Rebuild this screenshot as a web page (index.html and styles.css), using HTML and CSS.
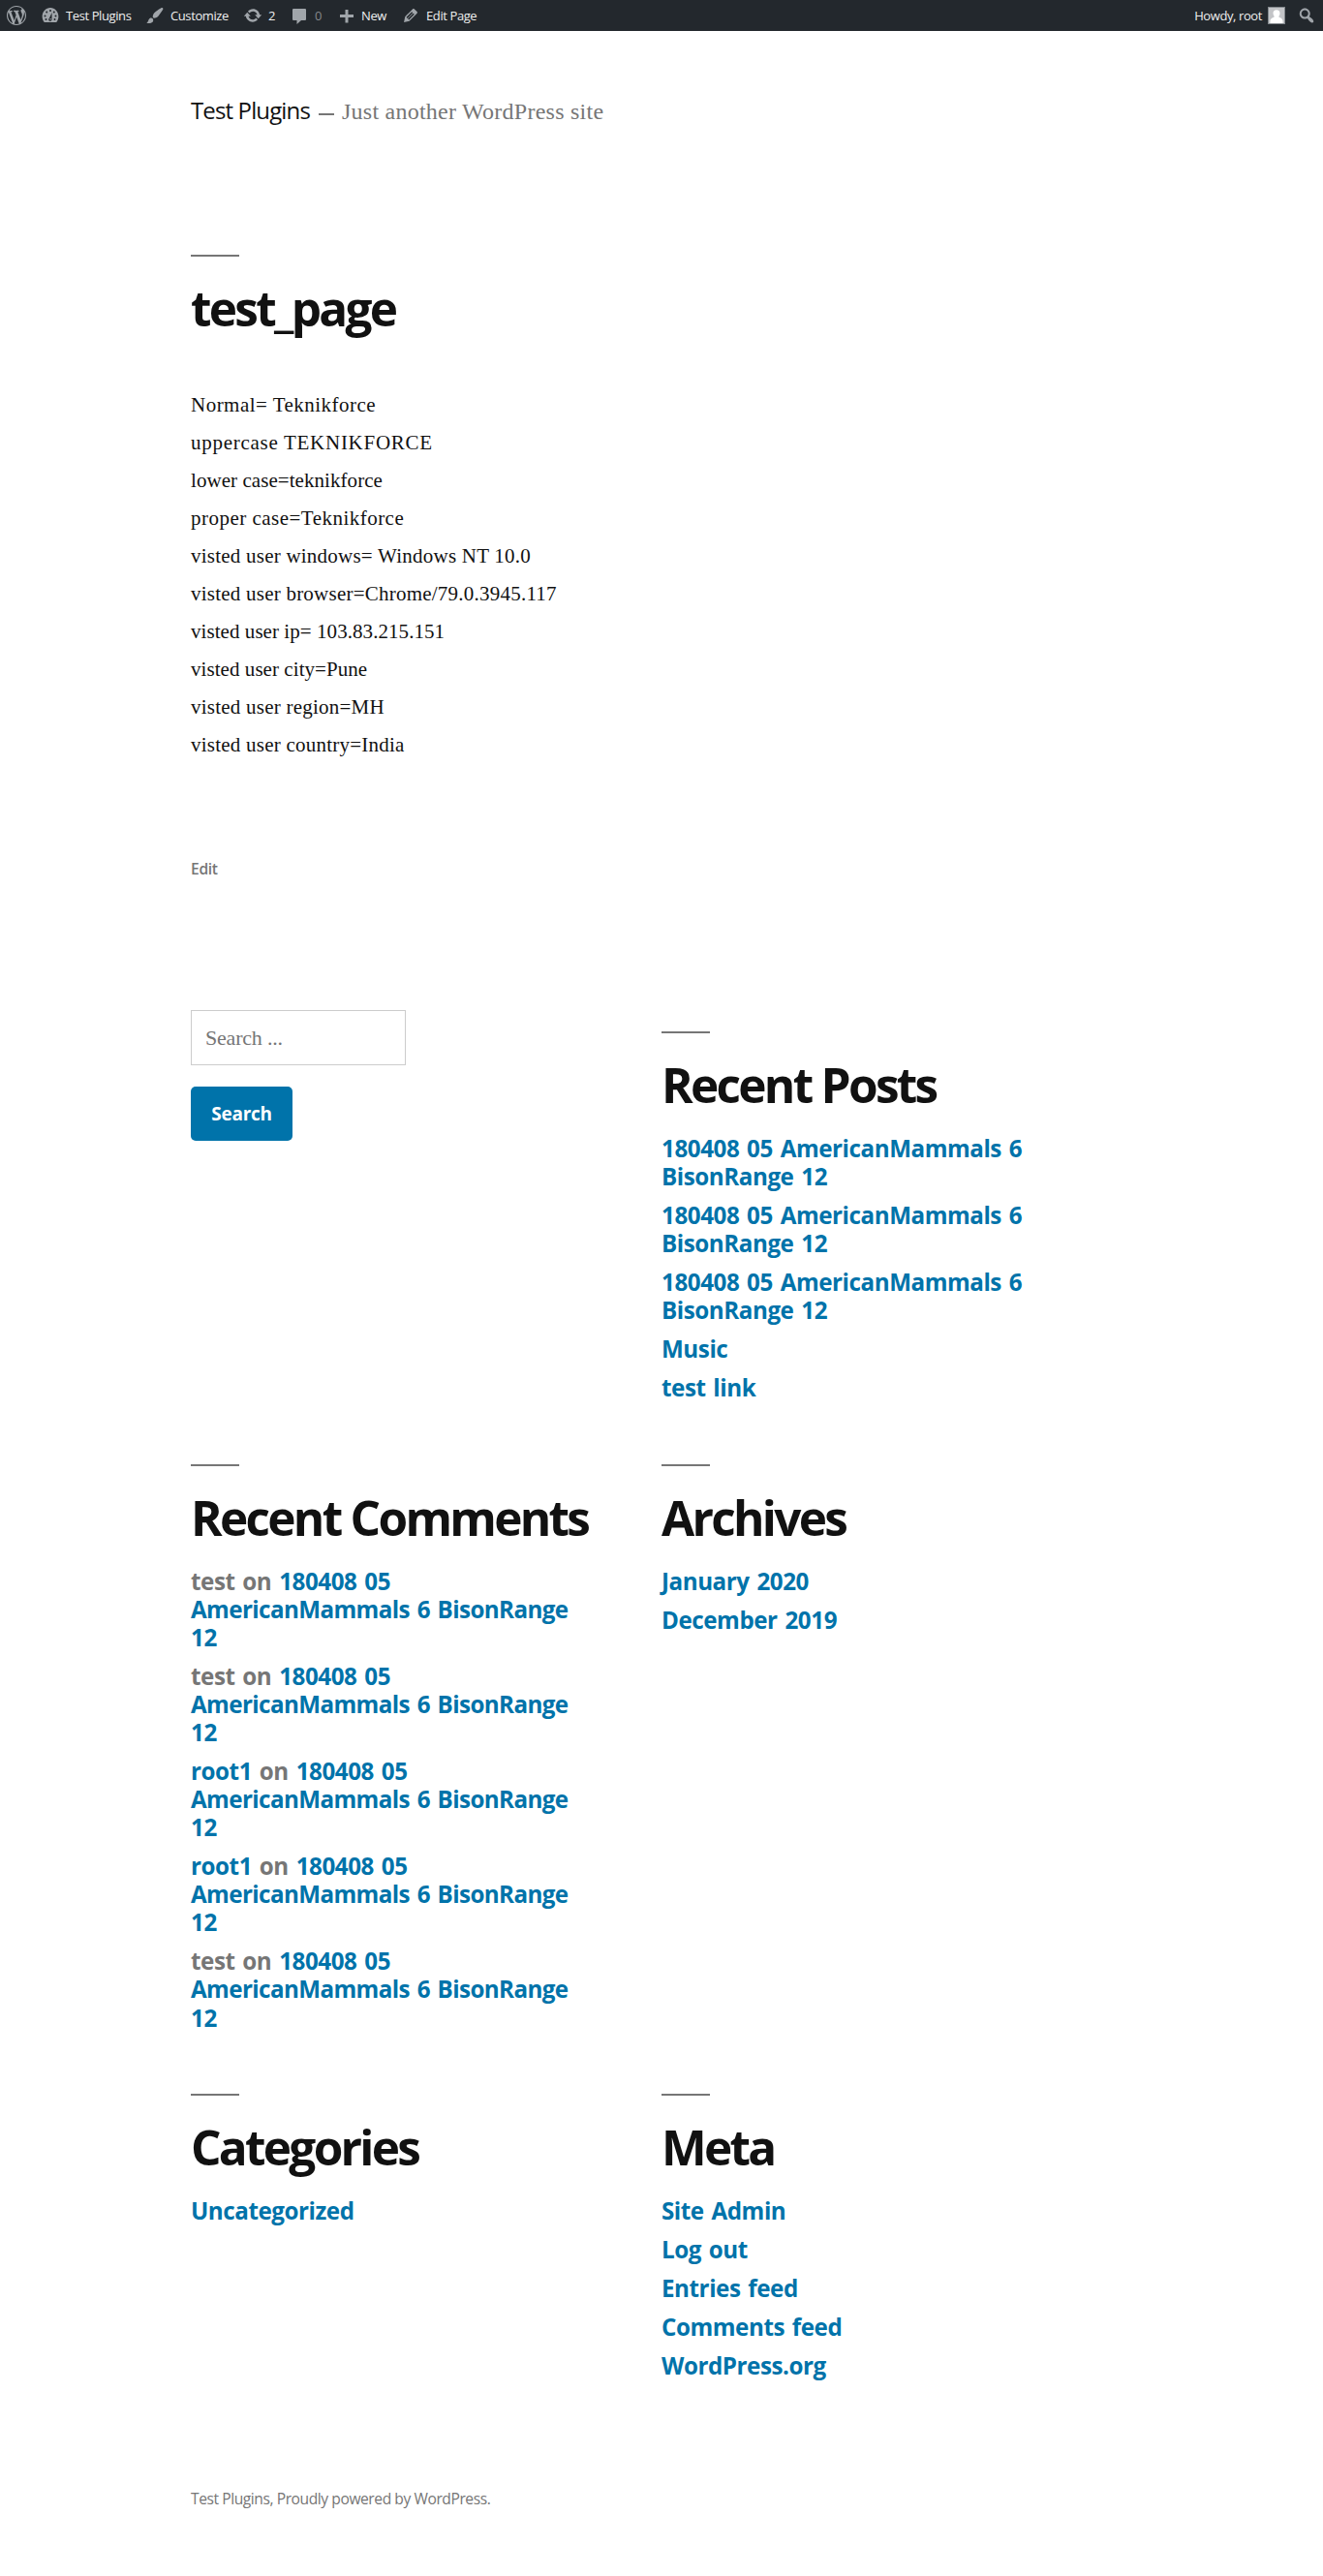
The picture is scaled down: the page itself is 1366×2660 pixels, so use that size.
FILE: index.html
```html
<!DOCTYPE html>
<html lang="en">
<head>
<meta charset="utf-8">
<title>test_page – Test Plugins</title>
<link rel="stylesheet" href="styles.css">
</head>
<body>
<nav class="adminbar">
  <a class="bar-item bar-logo"><svg class="icon" viewBox="0 0 20 20"><path d="M20 10c0-5.51-4.49-10-10-10C4.48 0 0 4.49 0 10c0 5.52 4.48 10 10 10 5.51 0 10-4.48 10-10zM7.78 15.37L4.37 6.22c.55-.02 1.17-.08 1.17-.08.5-.06.44-1.13-.06-1.11 0 0-1.45.11-2.37.11-.18 0-.37 0-.58-.01C4.12 2.69 6.87 1.11 10 1.11c2.33 0 4.45.87 6.05 2.34-.68-.11-1.65.39-1.65 1.58 0 .74.45 1.36.9 2.1.35.61.55 1.36.55 2.46 0 1.49-1.4 5-1.4 5l-3.03-8.37c.54-.02.82-.17.82-.17.5-.05.44-1.25-.06-1.22 0 0-1.44.12-2.38.12-.87 0-2.33-.12-2.33-.12-.5-.03-.56 1.2-.06 1.22l.92.08 1.26 3.41zM17.41 10c.24-.64.74-1.87.43-4.25.7 1.29 1.05 2.71 1.05 4.25 0 3.29-1.73 6.24-4.4 7.78.97-2.59 1.94-5.2 2.92-7.78zM6.1 18.09C3.12 16.65 1.11 13.53 1.11 10c0-1.3.23-2.48.72-3.59C3.25 10.3 4.67 14.2 6.1 18.09zm4.03-6.63l2.58 6.98c-.86.29-1.76.45-2.71.45-.79 0-1.57-.11-2.29-.33.81-2.38 1.62-4.74 2.42-7.1z"/></svg></a>
  <a class="bar-item bar-site"><svg class="icon" viewBox="0 0 20 20"><path d="M3.76 17h12.48c1.34-1.62 2.15-3.7 2.15-5.97C18.39 6.05 14.63 2 10 2S1.61 6.05 1.61 11.03c0 2.27.81 4.35 2.15 5.97z"/><g class="cut"><circle cx="10" cy="5" r="1"/><circle cx="6.2" cy="6.6" r="1"/><circle cx="13.8" cy="6.6" r="1"/><circle cx="4.5" cy="10.5" r="1"/><circle cx="15.5" cy="10.5" r="1"/><circle cx="5.5" cy="14" r="1"/><circle cx="14.5" cy="14" r="1"/><path d="M11.6 7l-.1 6.6a1.7 1.7 0 1 1-2.6-.9z"/></g><circle cx="10.1" cy="13.7" r=".7"/></svg><span class="label">Test Plugins</span></a>
  <a class="bar-item bar-customize"><svg class="icon" viewBox="0 0 20 20"><path d="M18.33 3.57s.27-.8-.31-1.36c-.53-.52-1.22-.24-1.22-.24-.61.3-5.76 3.47-7.67 5.57-.86.96-2.06 3.79-1.09 4.82.92.98 3.96-.17 4.79-1 2.06-2.06 5.21-7.17 5.5-7.79zM1.4 17.65c2.37-1.56 1.46-3.41 3.23-4.64.93-.65 2.22-.62 3.08.29.63.67.8 2.57-.16 3.46-1.57 1.45-4 1.55-6.15.89z"/></svg><span class="label">Customize</span></a>
  <a class="bar-item bar-updates"><svg class="icon" viewBox="0 0 20 20"><path d="M10.2 3.28c3.53 0 6.43 2.61 6.92 6h2.08l-3.5 4-3.5-4h2.32c-.45-1.97-2.21-3.45-4.32-3.45-1.45 0-2.73.71-3.54 1.78L4.95 5.66C6.23 4.2 8.11 3.28 10.2 3.28zm-.4 13.44c-3.52 0-6.43-2.61-6.92-6H.8l3.5-4c1.17 1.33 2.33 2.67 3.5 4H5.48c.45 1.97 2.21 3.45 4.32 3.45 1.45 0 2.73-.71 3.54-1.78l1.71 1.95c-1.28 1.46-3.15 2.38-5.25 2.38z"/></svg><span class="label">2</span></a>
  <a class="bar-item bar-comments"><svg class="icon" viewBox="0 0 20 20"><path d="M4 3h12q1 0 1 1v10q0 1-1 1h-4l-4.500 4v-4H4q-1 0-1-1V4q0-1 1-1z"/></svg><span class="label dim">0</span></a>
  <a class="bar-item bar-new"><svg class="icon" viewBox="0 0 20 20"><path d="M17 9v3h-5.500v5.500h-3V12H3V9h5.500V4h3v5z"/></svg><span class="label">New</span></a>
  <a class="bar-item bar-edit"><svg class="icon" viewBox="0 0 20 20"><path d="M13.89 3.39l2.71 2.72c.46.46.42 1.24.03 1.64l-8.01 8.02-5.56 1.16 1.16-5.58s7.6-7.63 7.99-8.03c.39-.39 1.22-.39 1.68.07zm-2.73 2.79l-5.59 5.61 1.11 1.11 5.54-5.65zm-2.97 8.23l5.58-5.6-1.07-1.08-5.59 5.6z"/></svg><span class="label">Edit Page</span></a>
  <a class="bar-item bar-account"><span class="label">Howdy, root</span><svg class="avatar" viewBox="0 0 18 18"><rect x=".5" y=".5" width="17" height="17"/><path d="M9 3.200c2.300 0 3.700 1.600 3.500 3.800-.1 1.300-.6 2.200-1.300 3 .3 1.300 4 1.500 4.300 4.500V17h-13v-2.500c.3-3 4-3.200 4.300-4.500-.7-.8-1.200-1.700-1.300-3C5.300 4.800 6.700 3.200 9 3.200z"/></svg></a>
  <a class="bar-item bar-search"><svg class="icon" viewBox="0 0 20 20"><path d="M12.14 4.18c1.87 1.87 2.11 4.75.72 6.89.12.1.22.21.36.31.2.16.47.36.81.59.34.24.56.39.66.47.42.31.73.57.94.78.32.32.6.65.84 1 .25.35.44.69.59 1.04.14.35.21.68.18 1-.02.32-.14.59-.36.81s-.49.34-.81.36c-.31.02-.65-.04-.99-.19-.35-.14-.7-.34-1.04-.59-.35-.24-.68-.52-1-.84-.21-.21-.47-.52-.77-.93-.1-.13-.25-.35-.47-.66-.22-.32-.4-.57-.56-.78-.16-.2-.29-.35-.44-.5-2.07 1.09-4.69.76-6.44-.98-2.14-2.15-2.14-5.64 0-7.78 2.15-2.15 5.63-2.15 7.78 0zm-1.41 6.36c1.36-1.37 1.36-3.58 0-4.95-1.37-1.37-3.59-1.37-4.95 0-1.37 1.37-1.37 3.58 0 4.95 1.36 1.37 3.58 1.37 4.95 0z"/></svg></a>
</nav>
<div class="site">
  <header class="branding">
    <a class="site-title">Test Plugins</a><span class="dash"></span><span class="tagline">Just another WordPress site</span>
  </header>
  <main>
    <h1 class="heading page-title">test_page</h1>
    <div class="entry">
      <p class="loose">Normal= Teknikforce</p>
      <p class="caps">uppercase TEKNIKFORCE</p>
      <p class="snug">lower case=teknikforce</p>
      <p class="loose">proper case=Teknikforce</p>
      <p>visted user windows= Windows NT 10.0</p>
      <p>visted user browser=Chrome/79.0.3945.117</p>
      <p class="snug">visted user ip= 103.83.215.151</p>
      <p class="snug">visted user city=Pune</p>
      <p>visted user region=MH</p>
      <p>visted user country=India</p>
    </div>
    <a class="edit-link">Edit</a>
  </main>
  <aside class="widgets">
    <form class="search-form">
      <input class="search-field" type="text" placeholder="Search ...">
      <button class="search-submit" type="button">Search</button>
    </form>
    <section class="widget widget-first">
      <h2 class="heading">Recent Posts</h2>
      <ul class="list">
        <li><a>180408 05 AmericanMammals 6<br>BisonRange 12</a></li>
        <li><a>180408 05 AmericanMammals 6<br>BisonRange 12</a></li>
        <li><a>180408 05 AmericanMammals 6<br>BisonRange 12</a></li>
        <li><a>Music</a></li>
        <li><a>test link</a></li>
      </ul>
    </section>
    <section class="widget">
      <h2 class="heading">Recent Comments</h2>
      <ul class="list">
        <li>test on <a>180408 05<br><span class="tight">AmericanMammals 6 BisonRange</span><br>12</a></li>
        <li>test on <a>180408 05<br><span class="tight">AmericanMammals 6 BisonRange</span><br>12</a></li>
        <li><a>root1</a> on <a>180408 05<br><span class="tight">AmericanMammals 6 BisonRange</span><br>12</a></li>
        <li><a>root1</a> on <a>180408 05<br><span class="tight">AmericanMammals 6 BisonRange</span><br>12</a></li>
        <li>test on <a>180408 05<br><span class="tight">AmericanMammals 6 BisonRange</span><br>12</a></li>
      </ul>
    </section>
    <section class="widget">
      <h2 class="heading">Archives</h2>
      <ul class="list">
        <li><a>January 2020</a></li>
        <li><a>December 2019</a></li>
      </ul>
    </section>
    <section class="widget">
      <h2 class="heading">Categories</h2>
      <ul class="list">
        <li><a>Uncategorized</a></li>
      </ul>
    </section>
    <section class="widget">
      <h2 class="heading">Meta</h2>
      <ul class="list">
        <li><a>Site Admin</a></li>
        <li><a>Log out</a></li>
        <li><a>Entries feed</a></li>
        <li><a>Comments feed</a></li>
        <li><a>WordPress.org</a></li>
      </ul>
    </section>
  </aside>
  <footer class="site-info">Test Plugins, Proudly powered by WordPress.</footer>
</div>
</body>
</html>
```
FILE: styles.css
```css
* { box-sizing: border-box; }
body { margin: 0; background: #fff; color: #111; font-family: "Liberation Serif", serif; }
.adminbar { display: flex; align-items: center; height: 32px; padding-left: 7px; background: #23282d; font: 13px/32px "Open Sans", sans-serif; color: #eee; }
.bar-item { display: flex; align-items: center; flex: none; white-space: nowrap; }
.icon { display: block; flex: none; width: 20px; height: 20px; fill: #a0a5aa; }
.cut { fill: #23282d; }
.label { letter-spacing: -0.4px; }
.bar-logo { width: 35px; }
.bar-site { width: 108px; gap: 6px; }
.bar-customize { width: 101px; gap: 6px; }
.bar-updates { width: 48px; gap: 6px; }
.bar-comments { width: 49px; gap: 6px; }
.bar-new { width: 66px; gap: 5px; }
.bar-edit { gap: 6px; }
.dim { color: #83878b; }
.bar-account { margin-left: auto; gap: 6px; }
.avatar { width: 18px; height: 18px; fill: #fff; }
.avatar rect { fill: #c3c4c7; stroke: #82878c; }
.bar-search { padding: 0 7px 0 12px; }

.site { padding-left: 197px; }
.branding { display: flex; align-items: baseline; padding-top: 62px; height: 101px; line-height: 40px; white-space: nowrap; }
.site-title { font: 24px/40px "Open Sans", sans-serif; letter-spacing: -0.87px; }
.dash { align-self: flex-start; width: 16px; height: 2px; margin: 23px 8px 0 9px; background: #767676; }
.tagline { font-size: 24px; letter-spacing: 0.25px; color: #767676; }
.heading { margin: 0; font: bold 49.5px/60px "Open Sans", sans-serif; letter-spacing: -2.7px; white-space: nowrap; }
.heading::before { content: ""; display: block; width: 50px; height: 2px; margin-bottom: 23px; background: #767676; }
.page-title { margin-top: 130px; }
.entry { margin-top: 51px; font-size: 21px; line-height: 39px; letter-spacing: 0.23px; }
.entry p { margin: 0; }
.entry .loose { letter-spacing: 0.48px; }
.entry .caps { letter-spacing: 0.72px; }
.entry .snug { letter-spacing: 0.06px; }
.edit-link { display: block; margin-top: 96px; font: 600 15.6px/24px "Open Sans", sans-serif; letter-spacing: -0.3px; color: #767676; }

.widgets { display: grid; grid-template-columns: 486px 486px; margin-top: 134px; }
.search-form { display: flex; flex-direction: column; align-items: flex-start; gap: 22px; }
.search-field { width: 222px; height: 57px; padding: 0 14px; border: 1px solid #ccc; font: 22px "Liberation Serif", serif; letter-spacing: -0.2px; }
.search-field::placeholder { color: #767676; opacity: 1; }
.search-submit { width: 105px; height: 56px; padding: 0; border: 0; border-radius: 5px; background: #0073aa; color: #fff; font: bold 19px "Open Sans", sans-serif; letter-spacing: -0.3px; }
.widget { padding-bottom: 53.5px; }
.widget-first { padding-top: 22px; }
.list { margin: 21px 0 0; padding: 0; list-style: none; font: bold 24.2px/29.04px "Open Sans", sans-serif; letter-spacing: -0.45px; word-spacing: 2px; color: #767676; white-space: nowrap; }
.list li { margin-bottom: 11px; }
.list a { color: #0073aa; }
.list .tight { letter-spacing: -0.6px; }
.site-info { margin-top: 46px; font: 15.6px/24px "Open Sans", sans-serif; letter-spacing: -0.43px; color: #767676; }
```
